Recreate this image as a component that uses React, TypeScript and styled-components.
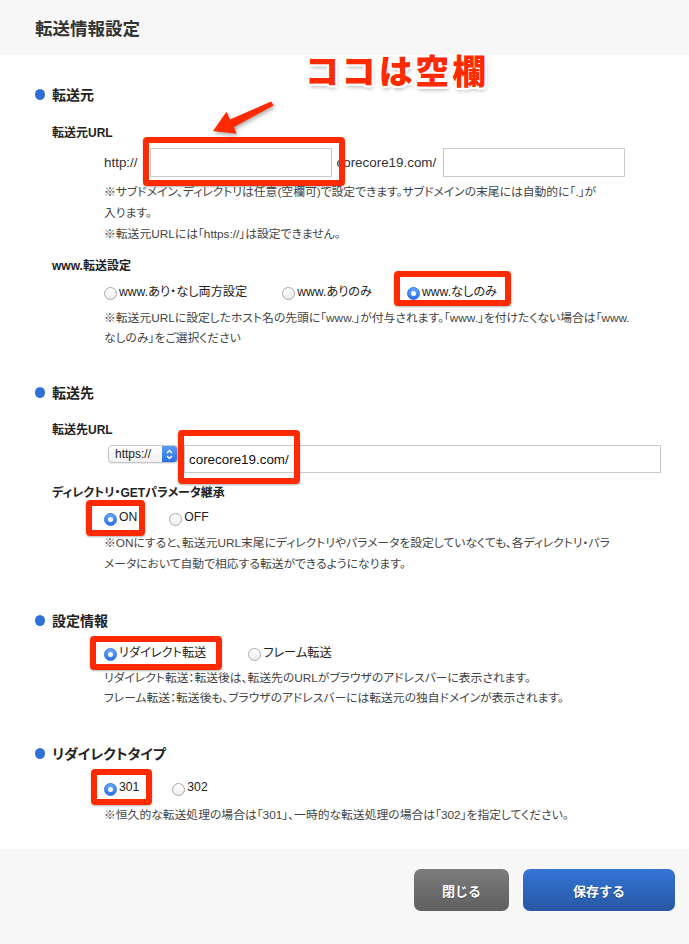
import * as React from 'react';
import styled, { createGlobalStyle } from 'styled-components';

const GlobalStyle = createGlobalStyle`
  html, body {
    margin: 0;
    padding: 0;
    background: #fff;
  }
  body {
    font-family: "Liberation Sans", "Noto Sans CJK JP", sans-serif;
    font-feature-settings: "palt";
    color: #333;
  }
`;

const Page = styled.div`
  position: relative;
  min-height: 100vh;
  display: flex;
  flex-direction: column;
`;

const Header = styled.header`
  height: 55px;
  background: #f7f7f7;
  display: flex;
  align-items: center;
  padding-left: 35px;
`;

const Title = styled.h1`
  margin: 0;
  font-size: 17.5px;
  font-weight: bold;
  color: #333;
`;

const Body = styled.main`
  padding: 29px 0 24px 35px;
`;

const Section = styled.section<{ $mt?: number }>`
  margin-top: ${(p) => p.$mt ?? 0}px;
`;

const Heading = styled.h2`
  margin: 0;
  height: 20px;
  display: flex;
  align-items: center;
  gap: 7px;
  font-size: 14px;
  font-weight: bold;
  color: #222;

  &::before {
    content: '';
    width: 10px;
    height: 11px;
    border-radius: 50%;
    background: #2f6fd6;
  }
`;

const SubLabel = styled.div<{ $mt: number }>`
  margin: ${(p) => p.$mt}px 0 0 17px;
  line-height: 18px;
  font-size: 12px;
  font-weight: bold;
  color: #222;
`;

const Content = styled.div<{ $mt: number }>`
  margin: ${(p) => p.$mt}px 0 0 69px;
`;

const UrlRow = styled.div`
  display: flex;
  align-items: center;
  height: 29px;
  font-size: 13.4px;
  color: #333;
`;

const Affix = styled.span<{ $ml?: number }>`
  margin-left: ${(p) => p.$ml ?? 0}px;
  white-space: nowrap;
`;

const FieldWrap = styled.div<{ $ml?: number }>`
  position: relative;
  margin-left: ${(p) => p.$ml ?? 0}px;
  display: flex;
`;

const TextInput = styled.div<{ $w: number; $h: number }>`
  box-sizing: border-box;
  width: ${(p) => p.$w}px;
  height: ${(p) => p.$h}px;
  border: 1px solid #c9c9c9;
  background: #fff;
  padding: 0 4px;
  display: flex;
  align-items: center;
  font-size: 13.4px;
  color: #111;
`;

const SelectBox = styled.div`
  box-sizing: border-box;
  margin-left: 4px;
  width: 70px;
  height: 18px;
  border: 1px solid #c4c4c4;
  border-radius: 4px;
  background: linear-gradient(#ffffff, #f1f1f1);
  display: flex;
  align-items: center;
  justify-content: space-between;
  padding-left: 6px;
  font-size: 12px;
  color: #222;
  overflow: hidden;
  box-shadow: 0 1px 1px rgba(0, 0, 0, 0.08);
`;

const Stepper = styled.span`
  width: 15px;
  height: 100%;
  background: linear-gradient(#5a9cf8, #2a6fe2);
  display: flex;
  align-items: center;
  justify-content: center;
`;

const DestRow = styled.div`
  display: flex;
  align-items: flex-start;
  gap: 6px;
`;

const Notes = styled.p<{ $mt: number; $lh: number }>`
  margin: ${(p) => p.$mt}px 0 0 0;
  font-size: 11.8px;
  line-height: ${(p) => p.$lh}px;
  color: #444;
  white-space: nowrap;
`;

const RadioGroup = styled.div<{ $gap: number; $mt: number }>`
  margin-top: ${(p) => p.$mt}px;
  display: flex;
  align-items: center;
  gap: ${(p) => p.$gap}px;
  height: 18px;
`;

const RadioItem = styled.label`
  position: relative;
  display: inline-flex;
  align-items: center;
  gap: 2px;
  font-size: 12.2px;
  color: #222;
  white-space: nowrap;
`;

const RadioDot = styled.span<{ $on?: boolean }>`
  box-sizing: border-box;
  width: 13px;
  height: 13px;
  margin-top: 5px;
  border-radius: 50%;
  display: inline-flex;
  align-items: center;
  justify-content: center;
  border: 1px solid ${(p) => (p.$on ? '#2d73e6' : '#a9a9a9')};
  background: ${(p) => (p.$on ? 'linear-gradient(#69a6fb, #2b72e8)' : 'linear-gradient(#ffffff, #ededed)')};

  &::after {
    content: '';
    display: ${(p) => (p.$on ? 'block' : 'none')};
    width: 5px;
    height: 5px;
    border-radius: 50%;
    background: #fff;
  }
`;

const Mark = styled.span<{ $t: number; $r: number; $b: number; $l: number }>`
  position: absolute;
  top: ${(p) => p.$t}px;
  right: ${(p) => p.$r}px;
  bottom: ${(p) => p.$b}px;
  left: ${(p) => p.$l}px;
  border: 6px solid #ff2a00;
  border-radius: 4px;
  box-shadow: 0 1px 2px rgba(0, 0, 0, 0.3);
  pointer-events: none;
`;

const Callout = styled.div`
  position: absolute;
  left: 306px;
  top: 50px;
  font-size: 34px;
  line-height: 40px;
  font-weight: 900;
  letter-spacing: 3px;
  color: #ff2a00;
  font-family: "Noto Sans CJK JP", sans-serif;
  text-shadow:
    2px 0 0 #fff, -2px 0 0 #fff, 0 2px 0 #fff, 0 -2px 0 #fff,
    2px 2px 0 #fff, -2px -2px 0 #fff, 2px -2px 0 #fff, -2px 2px 0 #fff,
    1px 3px 4px rgba(0, 0, 0, 0.35);
`;

const ArrowSvg = styled.svg`
  position: absolute;
  left: 205px;
  top: 95px;
  overflow: visible;
  filter: drop-shadow(1px 2px 2px rgba(0, 0, 0, 0.35));
`;

const Footer = styled.footer`
  flex-grow: 1;
  background: #f7f7f7;
  display: flex;
  justify-content: flex-end;
  align-items: flex-start;
  gap: 14px;
  padding: 20px 14px 0 0;
`;

const Button = styled.button<{ $w: number; $primary?: boolean }>`
  width: ${(p) => p.$w}px;
  height: 42px;
  border: none;
  border-radius: 7px;
  font-family: inherit;
  font-size: 13px;
  font-weight: bold;
  color: #fff;
  cursor: pointer;
  background: ${(p) =>
    p.$primary ? 'linear-gradient(#3475d5, #2857a3)' : 'linear-gradient(#7c7c7c, #5f5f5f)'};
  text-shadow: 0 1px 1px rgba(0, 0, 0, 0.25);
`;

interface IRadioProps {
  label: string;
  on?: boolean;
  mark?: [number, number, number, number];
}

const Radio: React.FC<IRadioProps> = ({ label, on, mark }) => (
  <RadioItem>
    <RadioDot $on={on} />
    {label}
    {mark && <Mark $t={mark[0]} $r={mark[1]} $b={mark[2]} $l={mark[3]} />}
  </RadioItem>
);

const StepIcon = () => (
  <svg width="7" height="11" viewBox="0 0 7 11">
    <path d="M1 4 L3.5 1.5 L6 4 M1 7 L3.5 9.5 L6 7" fill="none" stroke="#fff" strokeWidth="1.3" />
  </svg>
);

const App: React.FC = () => {
  return (
    <Page>
      <GlobalStyle />
      <Header>
        <Title>転送情報設定</Title>
      </Header>
      <Body>
        <Section>
          <Heading>転送元</Heading>
          <SubLabel $mt={20}>転送元URL</SubLabel>
          <Content $mt={6}>
            <UrlRow>
              <Affix>http://</Affix>
              <FieldWrap $ml={12}>
                <TextInput $w={182} $h={29} />
                <Mark $t={-11} $r={-13} $b={-9} $l={-7} />
              </FieldWrap>
              <Affix $ml={5}>corecore19.com/</Affix>
              <FieldWrap $ml={7}>
                <TextInput $w={182} $h={29} />
              </FieldWrap>
            </UrlRow>
            <Notes $mt={5} $lh={21}>
              ※サブドメイン、ディレクトリは任意(空欄可)で設定できます。サブドメインの末尾には自動的に「.」が
              <br />
              入ります。
              <br />
              ※転送元URLには「https://」は設定できません。
            </Notes>
          </Content>
          <SubLabel $mt={12}>www.転送設定</SubLabel>
          <Content $mt={7}>
            <RadioGroup $gap={35} $mt={0}>
              <Radio label="www.あり・なし両方設定" />
              <Radio label="www.ありのみ" />
              <Radio label="www.なしのみ" on mark={[-11, -14, -6, -13]} />
            </RadioGroup>
            <Notes $mt={8} $lh={20}>
              ※転送元URLに設定したホスト名の先頭に「www.」が付与されます。「www.」を付けたくない場合は「www.
              <br />
              なしのみ」をご選択ください
            </Notes>
          </Content>
        </Section>

        <Section $mt={34}>
          <Heading>転送先</Heading>
          <SubLabel $mt={19}>転送先URL</SubLabel>
          <Content $mt={6}>
            <DestRow>
              <SelectBox>
                https://
                <Stepper>
                  <StepIcon />
                </Stepper>
              </SelectBox>
              <FieldWrap>
                <TextInput $w={477} $h={28}>corecore19.com/</TextInput>
                <Mark $t={-15} $r={361} $b={-11} $l={-6} />
              </FieldWrap>
            </DestRow>
          </Content>
          <SubLabel $mt={11}>ディレクトリ・GETパラメータ継承</SubLabel>
          <Content $mt={6}>
            <RadioGroup $gap={32} $mt={0}>
              <Radio label="ON" on mark={[-8, -8, -10, -18]} />
              <Radio label="OFF" />
            </RadioGroup>
            <Notes $mt={7} $lh={21}>
              ※ONにすると、転送元URL末尾にディレクトリやパラメータを設定していなくても、各ディレクトリ・パラ
              <br />
              メータにおいて自動で相応する転送ができるようになります。
            </Notes>
          </Content>
        </Section>

        <Section $mt={35}>
          <Heading>設定情報</Heading>
          <Content $mt={13}>
            <RadioGroup $gap={42} $mt={0}>
              <Radio label="リダイレクト転送" on mark={[-7, -16, -9, -14]} />
              <Radio label="フレーム転送" />
            </RadioGroup>
            <Notes $mt={7} $lh={20}>
              リダイレクト転送：転送後は、転送先のURLがブラウザのアドレスバーに表示されます。
              <br />
              フレーム転送：転送後も、ブラウザのアドレスバーには転送元の独自ドメインが表示されます。
            </Notes>
          </Content>
        </Section>

        <Section $mt={35}>
          <Heading>リダイレクトタイプ</Heading>
          <Content $mt={15}>
            <RadioGroup $gap={33} $mt={0}>
              <Radio label="301" on mark={[-9, -13, -9, -13]} />
              <Radio label="302" />
            </RadioGroup>
            <Notes $mt={9} $lh={20}>
              ※恒久的な転送処理の場合は「301」、一時的な転送処理の場合は「302」を指定してください。
            </Notes>
          </Content>
        </Section>
      </Body>

      <Footer>
        <Button $w={95}>閉じる</Button>
        <Button $w={152} $primary>
          保存する
        </Button>
      </Footer>

      <Callout>ココは空欄</Callout>
      <ArrowSvg width="80" height="45" viewBox="0 0 80 45">
        <path
          d="M66.2 6.4 L68.6 10.6 L29 32 L31.5 38.8 L8 36 L21.5 16.8 L25 24.5 Z"
          fill="#ff2a00"
        />
      </ArrowSvg>
    </Page>
  );
};

export default App;
